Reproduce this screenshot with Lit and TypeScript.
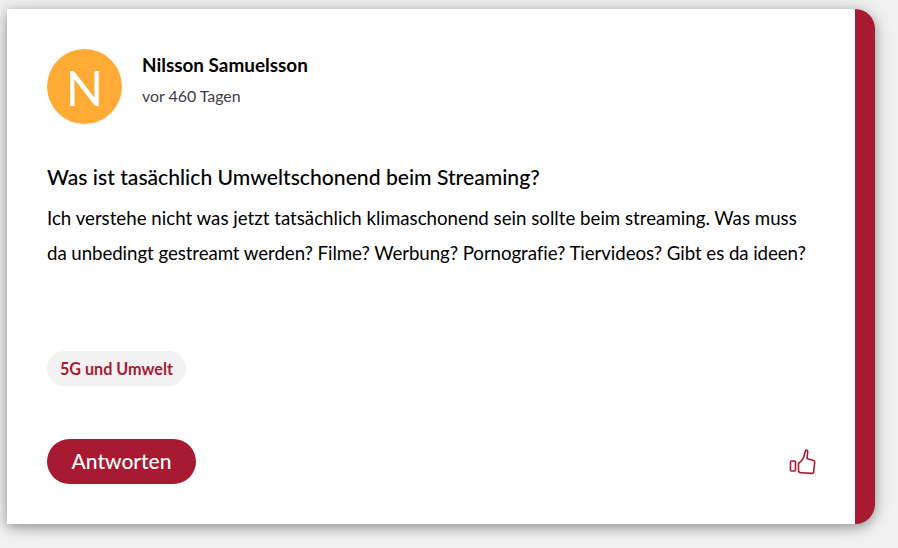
import { LitElement, html, css } from "lit";
import { customElement } from "lit/decorators.js";

@customElement("app-root")
export class AppRoot extends LitElement {
  static styles = css`
    :host {
      display: block;
      width: 898px;
      height: 548px;
      box-sizing: border-box;
      padding: 9px 23px 24px 7px;
      font-family: "Lato", "Noto Sans", sans-serif;
      font-variant-ligatures: none;
      color: #000;
      overflow: hidden;
      background: #f2f2f2;
    }
    .card {
      box-sizing: border-box;
      height: 515px;
      background: #fff;
      border-right: 20px solid #a81a31;
      border-radius: 0 20px 20px 0;
      box-shadow: 0 3px 12px rgba(0, 0, 0, 0.36), 0 2px 30px rgba(0, 0, 0, 0.1);
      padding: 40px 40px 40px;
      display: flex;
      flex-direction: column;
    }
    .head {
      display: flex;
      gap: 20px;
      align-items: flex-start;
    }
    .avatar {
      width: 75px;
      height: 75px;
      border-radius: 50%;
      background: #ffab36;
      color: #fff;
      display: flex;
      align-items: center;
      justify-content: center;
      font-size: 49px;
      font-weight: 400;
    }
    .who {
      padding-top: 4px;
    }
    .name {
      font-size: 18.9px;
      font-weight: 700;
      line-height: 24px;
    }
    .when {
      font-size: 15.9px;
      line-height: 24px;
      margin-top: 7px;
      color: #3c3c46;
    }
    h2 {
      margin: 39px 0 0;
      font-size: 21.15px;
      font-weight: 500;
      line-height: 28px;
    }
    p {
      margin: 10px 0 0;
      font-size: 18.7px;
      line-height: 35px;
    }
    .line {
      display: block;
    }
    .tight {
      letter-spacing: -0.07px;
    }
    .tag {
      align-self: flex-start;
      margin-top: 80px;
      height: 35px;
      padding: 0 13px;
      border-radius: 18px;
      background: #f2f2f2;
      color: #a81a31;
      font-size: 16.15px;
      font-weight: 700;
      display: flex;
      align-items: center;
    }
    .foot {
      margin-top: auto;
      display: flex;
      justify-content: space-between;
      align-items: center;
    }
    .btn {
      height: 45px;
      width: 149px;
      border: 0;
      border-radius: 23px;
      background: #a81a31;
      color: #fff;
      font: 500 21px "Lato", "Noto Sans", sans-serif;
      padding: 0 0 3px;
    }
    .like {
      width: 28px;
      height: 28px;
      display: block;
      color: #a81a31;
      margin-right: -1px;
    }
  `;

  render() {
    return html`
      <div class="card">
        <div class="head">
          <div class="avatar">N</div>
          <div class="who">
            <div class="name">Nilsson Samuelsson</div>
            <div class="when">vor 460 Tagen</div>
          </div>
        </div>
        <h2>Was ist tasächlich Umweltschonend beim Streaming?</h2>
        <p>
          <span class="line">Ich verstehe nicht was jetzt tatsächlich klimaschonend sein sollte beim streaming. Was muss</span>
          <span class="line tight">da unbedingt gestreamt werden? Filme? Werbung? Pornografie? Tiervideos? Gibt es da ideen?</span>
        </p>
        <div class="tag">5G und Umwelt</div>
        <div class="foot">
          <button class="btn">Antworten</button>
          <svg class="like" viewBox="0 0 28 28" fill="none" stroke="currentColor" stroke-width="1.6" stroke-linejoin="round" stroke-linecap="round">
            <rect x="2.5" y="13" width="5" height="10" rx="1"></rect>
            <path d="M10.5 15.5 C12.5 14 14.5 12 15.3 10 L17.5 2.7 C18.5 1.6 19.8 2.2 19.7 3.6 L19 10.5 L25.5 12.6 C26.6 13 26.9 13.6 26.7 14.6 L25.6 24 C25.5 25.2 25 25.5 24 25.4 L13 24.8 C11.5 24.7 10.5 23.8 10.5 22.5 Z"></path>
          </svg>
        </div>
      </div>
    `;
  }
}
